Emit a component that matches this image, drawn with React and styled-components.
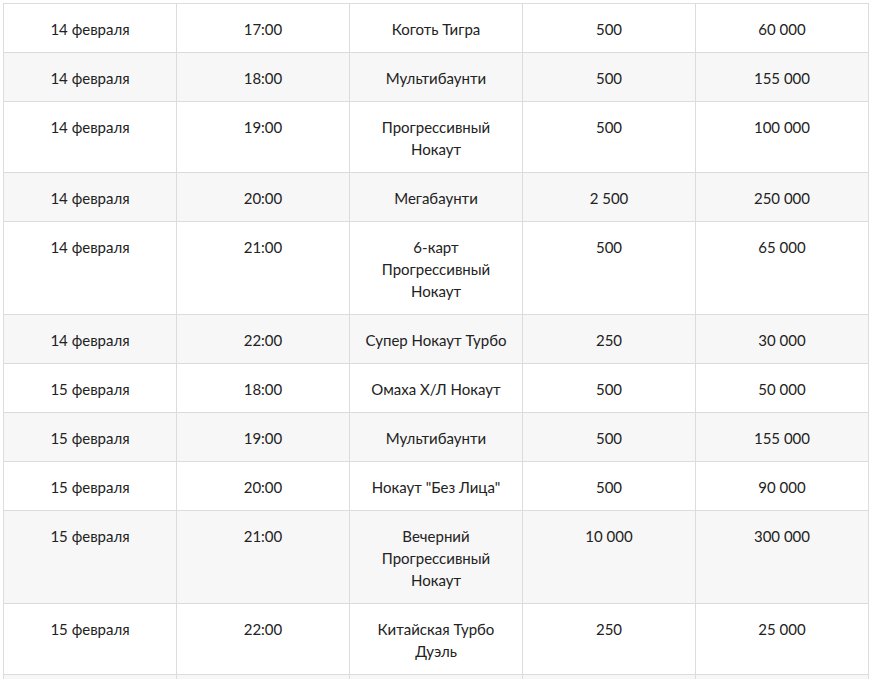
import React from 'react'
import styled, { createGlobalStyle } from 'styled-components';

const rows = [
  ['14 февраля', '17:00', 'Коготь Тигра', '500', '60 000'],
  ['14 февраля', '18:00', 'Мультибаунти', '500', '155 000'],
  ['14 февраля', '19:00', 'Прогрессивный Нокаут', '500', '100 000'],
  ['14 февраля', '20:00', 'Мегабаунти', '2 500', '250 000'],
  ['14 февраля', '21:00', '6-карт Прогрессивный Нокаут', '500', '65 000'],
  ['14 февраля', '22:00', 'Супер Нокаут Турбо', '250', '30 000'],
  ['15 февраля', '18:00', 'Омаха Х/Л Нокаут', '500', '50 000'],
  ['15 февраля', '19:00', 'Мультибаунти', '500', '155 000'],
  ['15 февраля', '20:00', 'Нокаут "Без Лица"', '500', '90 000'],
  ['15 февраля', '21:00', 'Вечерний Прогрессивный Нокаут', '10 000', '300 000'],
  ['15 февраля', '22:00', 'Китайская Турбо Дуэль', '250', '25 000'],
  ['15 февраля', '23:00', 'Мультибаунти', '500', '155 000'],
];

const GlobalStyle = createGlobalStyle`
  body {
    margin: 0;
    background: #fff;
    font-family: Lato, "Noto Sans", sans-serif;
  }
`;

function App() {
  return (
    <Page>
      <GlobalStyle />
      <Schedule>
        <tbody>
          {rows.map((row, i) => (
            <Row key={i} $striped={i % 2 === 1}>
              {row.map((cell, j) => (
                <Cell key={j}>{cell}</Cell>
              ))}
            </Row>
          ))}
        </tbody>
      </Schedule>
    </Page>
  )
}

const Page = styled.div`
  padding: 3px 0 0 3px;
  height: 679px;
  overflow: hidden;
  box-sizing: border-box;
`;

const Schedule = styled.table`
  width: 866px;
  table-layout: fixed;
  border-collapse: collapse;
`;

const Row = styled.tr`
  background: ${p => (p.$striped ? '#f7f7f7' : '#fff')};
`;

const Cell = styled.td`
  border: 1px solid #dcdcdc;
  padding: 14px 12px 12px;
  text-align: center;
  vertical-align: top;
  font-size: 15px;
  line-height: 22px;
  color: #222;
`;

export default App
